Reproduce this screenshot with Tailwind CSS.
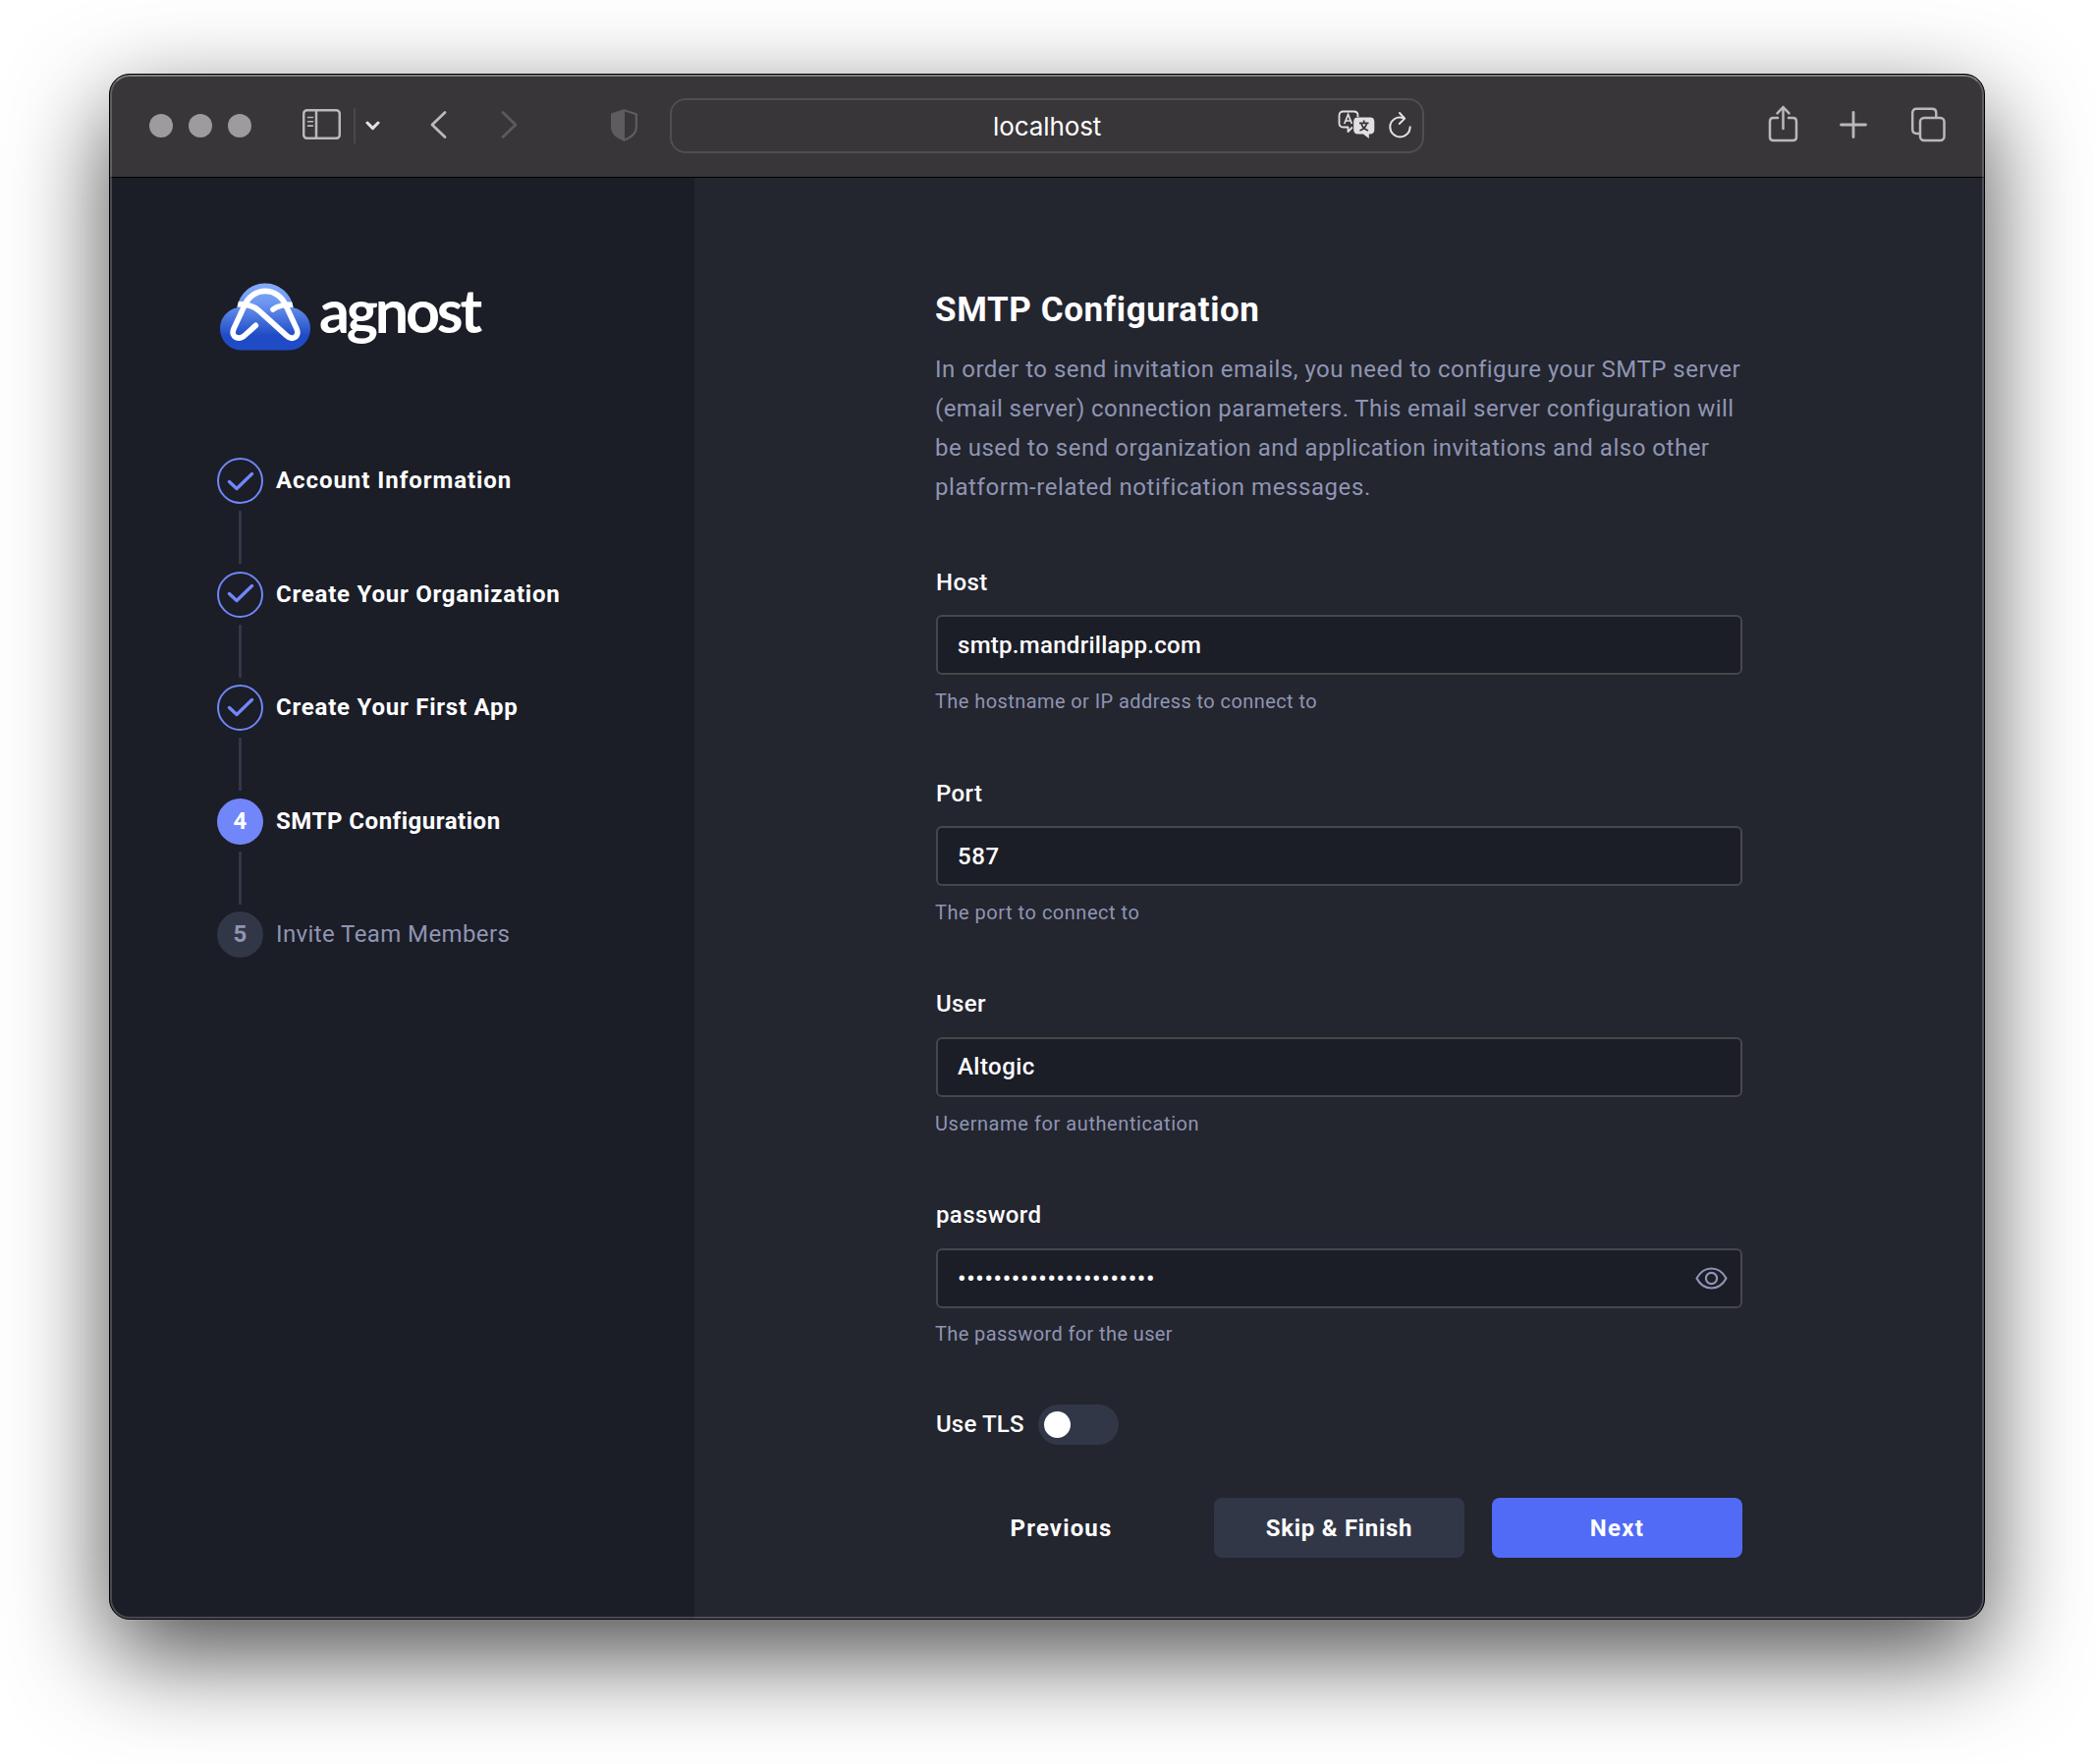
<!DOCTYPE html>
<html lang="en">
<head>
<meta charset="utf-8">
<title>localhost</title>
<script src="https://cdn.jsdelivr.net/npm/@tailwindcss/browser@4"></script>
</head>
<body class="bg-white w-[2132px] h-[1796px] overflow-hidden pl-[111px] pt-[75px] font-[Roboto,sans-serif] text-white">
<div class="relative w-[1910px] h-[1574px] rounded-[21px] border border-black bg-[#23252f] overflow-hidden shadow-[0_36px_100px_rgba(0,0,0,0.7)]">
  <div class="flex h-full flex-col">
    <!-- Toolbar -->
    <header class="relative flex h-[105px] shrink-0 items-start border-b border-black bg-[#393639] pl-[40px] pr-[38px]">
      <div class="mt-[40px] flex gap-4">
        <span class="size-6 rounded-full bg-[#9d9b9e]"></span>
        <span class="size-6 rounded-full bg-[#9d9b9e]"></span>
        <span class="size-6 rounded-full bg-[#9d9b9e]"></span>
      </div>
      <svg class="ml-[52px] mt-[35px] h-[31px] w-[39px]" viewBox="0 0 39 31" fill="none" stroke="#bab8bb" stroke-width="2.5"><rect x="1.2" y="1.2" width="36.6" height="28.6" rx="3.5"/><path d="M14 1v29"/><path d="M5.500 8.500h5M5.500 12.800h5M5.500 17.100h5" stroke-width="1.600" stroke-linecap="round"/></svg>
      <span class="ml-[13px] mt-[34px] h-9 w-[2px] bg-[#4b484b]"></span>
      <svg class="ml-[10px] mt-[46px] h-[12px] w-[15px]" viewBox="0 0 15 12" fill="none" stroke="#e4e2e4" stroke-width="3" stroke-linecap="round" stroke-linejoin="round"><path d="M2 3l5.500 5.600L13 3"/></svg>
      <svg class="ml-[50px] mt-[36px] h-[30px] w-[18px]" viewBox="0 0 18 30" fill="none" stroke="#bab8bb" stroke-width="2.800" stroke-linecap="round" stroke-linejoin="round"><path d="M16 2.500L3 15l13 12.500"/></svg>
      <svg class="ml-[55px] mt-[36px] h-[30px] w-[18px]" viewBox="0 0 18 30" fill="none" stroke="#5d5a5d" stroke-width="2.800" stroke-linecap="round" stroke-linejoin="round"><path d="M2 2.500L15 15 2 27.500"/></svg>
      <svg class="ml-[94px] mt-[35px] h-[33px] w-[27px]" viewBox="0 0 27 33"><path d="M13.500 1.200L25.900 5.300V19C25.900 25 19 29.500 13.500 31.800 8 29.500 1.100 25 1.100 19V5.300z" fill="none" stroke="#5e5c5f" stroke-width="2.200" stroke-linejoin="round"/><path d="M14 1L1 5.300V19C1 25 8 29.500 14 32z" fill="#5e5c5f"/></svg>
      <div class="ml-[33px] mt-[24px] flex h-[56px] w-[768px] rounded-2xl border-2 border-[#504e50]">
        <div class="flex-1 pl-[327px] pt-[8px] font-[Inter,sans-serif] text-[26px] leading-[38px] tracking-[-0.1px]">localhost</div>
        <svg class="mr-[14px] mt-[10px] h-[29px] w-[38px]" viewBox="0 0 38 29" fill="none"><path d="M15 17.500l-4.500 4.500V17.500H5.500C3 17.500 1.500 16 1.500 13.500V5.500C1.500 3 3 1.500 5.500 1.500h11c2.500 0 4 1.500 4 4V7" stroke="#e2e0e2" stroke-width="1.800" stroke-linejoin="round"/><path d="M6.800 14L10.600 4.500 14.400 14M8 11h5.200" stroke="#e2e0e2" stroke-width="1.700"/><path d="M20.500 7.500H33c2.800 0 4.300 1.500 4.300 4.200v8.600c0 2.700-1.500 4.200-4.300 4.200h-1.200V29L26 24.500h-5.500c-2.800 0-4.300-1.500-4.300-4.200v-8.600c0-2.700 1.500-4.200 4.300-4.200z" fill="#e2e0e2"/><path d="M22 13.300h9.500M26.700 10.500v2.500M29.500 13.500c-1 4-4 6.500-7 7.500M24 13.500c1 4 4 6.500 7 7.500" stroke="#393639" stroke-width="1.700"/></svg>
        <svg class="mr-[11px] mt-[11px] h-[28px] w-[23px]" viewBox="0 0 23 28" fill="none" stroke="#e2e0e2" stroke-width="2" stroke-linecap="round" stroke-linejoin="round"><path d="M15.500 7.600C8 4.500 1.300 9.500 1.300 16.200a10.200 10.200 0 0 0 20.400 0"/><path d="M11 2l5.200 5.600L10.800 13"/></svg>
      </div>
      <div class="ml-auto flex">
        <svg class="mt-[30px] h-[39px] w-[32px]" viewBox="0 0 32 39" fill="none" stroke="#bab8bb" stroke-width="2.500" stroke-linecap="round" stroke-linejoin="round"><path d="M10 14H5.500C3 14 2 15.200 2 17.500V33.500C2 36 3 37 5.500 37h20c2.500 0 3.500-1 3.500-3.500V17.500c0-2.300-1-3.500-3.500-3.500H21"/><path d="M15.500 25V3M9.500 9.300L15.500 3l6 6.300"/></svg>
        <svg class="ml-[41px] mt-[37px] h-[28px] w-[28px]" viewBox="0 0 28 28" fill="none" stroke="#bab8bb" stroke-width="2.800" stroke-linecap="round"><path d="M14 1.500v25M1.500 14h25"/></svg>
        <svg class="ml-[44px] mt-[32px] h-[37px] w-[37px]" viewBox="0 0 37 37" fill="none" stroke="#bab8bb" stroke-width="2.500"><rect x="10" y="12" width="24.500" height="23" rx="4"/><path d="M9.500 28H6.500c-2.800 0-4.300-1.400-4.300-4.200V7C2.200 4.200 3.700 2.800 6.500 2.800h15.500c2.800 0 4.300 1.400 4.300 4.200V11.500"/></svg>
      </div>
    </header>

    <div class="flex min-h-0 flex-1">
      <!-- Steps -->
      <aside class="w-[595px] shrink-0 bg-[#1b1d27] pl-[109px] pt-[107px]">
        <div class="flex pl-[3px]">
          <svg class="h-[69px] w-[92px]" viewBox="42 52 276 207" fill="none">
            <defs>
              <linearGradient id="sky" x1="0" y1="53" x2="0" y2="258" gradientUnits="userSpaceOnUse"><stop offset="0" stop-color="#84acfb"/><stop offset=".3" stop-color="#6c95f0"/><stop offset=".78" stop-color="#1f4cc6"/><stop offset="1" stop-color="#1f4cc6"/></linearGradient>
              <clipPath id="cloud"><circle cx="180" cy="140" r="87"/><circle cx="108" cy="192" r="66"/><circle cx="252" cy="192" r="66"/><path d="M108 150h144v108H108z"/></clipPath>
            </defs>
            <g clip-path="url(#cloud)">
              <path d="M42 52h276v207H42z" fill="url(#sky)"/>
              <g stroke="#fff" stroke-width="17" stroke-linecap="round" stroke-linejoin="round">
                <path d="M151 182L119 211C100 229 73 218 84 192L115 125C140 61 220 61 245 125L276 192C287 217 262 229 245 213L162 138C142 120 122 115 90 117"/>
                <path d="M204 133C214 124 232 118 270 118"/>
              </g>
            </g>
          </svg>
          <div class="ml-[9px] -mt-[8px] font-[Lato,sans-serif] text-[61px] font-bold leading-[72px] tracking-[-3.2px]">agnost</div>
        </div>

        <ol class="mt-[109px] grid w-fit grid-cols-[47px_auto] gap-x-[13px] text-2xl font-bold leading-[47px]">
          <li class="contents">
            <div class="flex h-[115.5px] flex-col items-center"><span class="flex size-[47px] items-center justify-center rounded-full border-2 border-[#7186f8]"><svg class="mt-px h-[20px] w-[28px]" viewBox="0 0 28 20" fill="none" stroke="#7186f8" stroke-width="3.400" stroke-linecap="round" stroke-linejoin="round"><path d="M2.500 10.500L10 17.500 25.500 2.500"/></svg></span><span class="mt-[7px] h-[54px] w-[3px] bg-[#323748]"></span></div>
            <span class="tracking-[0.95px]">Account Information</span>
          </li>
          <li class="contents">
            <div class="flex h-[115.5px] flex-col items-center"><span class="flex size-[47px] items-center justify-center rounded-full border-2 border-[#7186f8]"><svg class="-mt-[2px] h-[20px] w-[28px]" viewBox="0 0 28 20" fill="none" stroke="#7186f8" stroke-width="3.400" stroke-linecap="round" stroke-linejoin="round"><path d="M2.500 10.500L10 17.500 25.500 2.500"/></svg></span><span class="mt-[7px] h-[54px] w-[3px] bg-[#323748]"></span></div>
            <span class="tracking-[0.77px]">Create Your Organization</span>
          </li>
          <li class="contents">
            <div class="flex h-[115.5px] flex-col items-center"><span class="flex size-[47px] items-center justify-center rounded-full border-2 border-[#7186f8]"><svg class="-mt-px h-[20px] w-[28px]" viewBox="0 0 28 20" fill="none" stroke="#7186f8" stroke-width="3.400" stroke-linecap="round" stroke-linejoin="round"><path d="M2.500 10.500L10 17.500 25.500 2.500"/></svg></span><span class="mt-[7px] h-[54px] w-[3px] bg-[#323748]"></span></div>
            <span class="tracking-[0.77px]">Create Your First App</span>
          </li>
          <li class="contents">
            <div class="flex h-[115.5px] flex-col items-center"><span class="flex size-[47px] items-center justify-center rounded-full bg-[#7186f8]">4</span><span class="mt-[7px] h-[54px] w-[3px] bg-[#323748]"></span></div>
            <span class="tracking-[0.52px]">SMTP Configuration</span>
          </li>
          <li class="contents text-[#8f95b2]">
            <div class="flex flex-col items-center"><span class="flex size-[47px] items-center justify-center rounded-full bg-[#323748]">5</span></div>
            <span class="font-normal tracking-[0.4px]">Invite Team Members</span>
          </li>
        </ol>
      </aside>

      <!-- Form -->
      <main class="w-[1067px] pl-[246px] pt-[115px]">
        <h1 class="-ml-px text-[35px] font-bold leading-10 tracking-[0.6px]">SMTP Configuration</h1>
        <p class="-ml-px mt-[20px] whitespace-nowrap text-2xl leading-10 text-[#8f95b2]">
          <span class="block tracking-[0.5px]">In order to send invitation emails, you need to configure your SMTP server</span>
          <span class="block tracking-[0.42px]">(email server) connection parameters. This email server configuration will</span>
          <span class="block tracking-[0.51px]">be used to send organization and application invitations and also other</span>
          <span class="block tracking-[0.58px]">platform-related notification messages.</span>
        </p>

        <div class="mt-[59px] flex flex-col gap-[62px] text-2xl font-medium">
          <div>
            <div class="leading-9 tracking-[0.4px]">Host</div>
            <div class="mt-[15px] flex h-[61px] items-center rounded-md border-2 border-[#47474a] bg-[#1b1d27] px-5 tracking-[0.28px]">smtp.mandrillapp.com</div>
            <div class="-ml-px mt-[13px] text-xl font-normal leading-7 tracking-[0.42px] text-[#8f95b2]">The hostname or IP address to connect to</div>
          </div>
          <div>
            <div class="leading-9 tracking-[0.4px]">Port</div>
            <div class="mt-[15px] flex h-[61px] items-center rounded-md border-2 border-[#47474a] bg-[#1b1d27] px-5 tracking-[0.6px]">587</div>
            <div class="-ml-px mt-[13px] text-xl font-normal leading-7 tracking-[0.52px] text-[#8f95b2]">The port to connect to</div>
          </div>
          <div>
            <div class="-mt-px leading-9 tracking-[0.36px]">User</div>
            <div class="mt-[16px] flex h-[61px] items-center rounded-md border-2 border-[#47474a] bg-[#1b1d27] px-5 pb-[2px] tracking-[0.45px]">Altogic</div>
            <div class="-ml-px mt-[13px] text-xl font-normal leading-7 tracking-[0.58px] text-[#8f95b2]">Username for authentication</div>
          </div>
          <div>
            <div class="-mt-px leading-9 tracking-[0.38px]">password</div>
            <div class="mt-[16px] flex h-[61px] items-center justify-between rounded-md border-2 border-[#47474a] bg-[#1b1d27] pl-5 pr-[13px]">
              <span class="tracking-[0.75px]">••••••••••••••••••••••</span>
              <svg class="-mt-px h-[23px] w-[33px]" viewBox="0 0 33 23" fill="none" stroke="#8f95b2" stroke-width="2.200" stroke-linejoin="round"><path d="M1.500 11.500C5 5 10.500 1.500 16.500 1.500S28 5 31.500 11.500C28 18 22.500 21.500 16.500 21.500S5 18 1.500 11.500z"/><circle cx="16.500" cy="11.500" r="5.600"/></svg>
            </div>
            <div class="-ml-px mt-[12px] text-xl font-normal leading-7 tracking-[0.38px] text-[#8f95b2]">The password for the user</div>
          </div>
        </div>

        <div class="mt-[58px] flex items-center text-2xl font-medium">
          <span class="w-[104px] pb-[2px] tracking-[0.17px]">Use TLS</span>
          <span class="flex h-[41px] w-[82px] items-center rounded-full bg-[#323748] pl-[6px]"><span class="size-[27px] rounded-full bg-white"></span></span>
        </div>

        <div class="mt-[54px] grid grid-cols-3 gap-7 text-center text-2xl font-bold leading-[61px]">
          <div class="h-[61px] pt-px tracking-[1.15px]">Previous</div>
          <div class="h-[61px] rounded-lg bg-[#323748] pt-px tracking-[0.7px]">Skip &amp; Finish</div>
          <div class="h-[61px] rounded-lg bg-[#516bf6] pt-px tracking-[1.3px]">Next</div>
        </div>
      </main>
    </div>
  </div>
  <!-- Inner highlight of the window frame -->
  <div class="pointer-events-none absolute inset-0 rounded-[20px] border-2 border-white/20 border-t-white/35"></div>
</div>
</body>
</html>
